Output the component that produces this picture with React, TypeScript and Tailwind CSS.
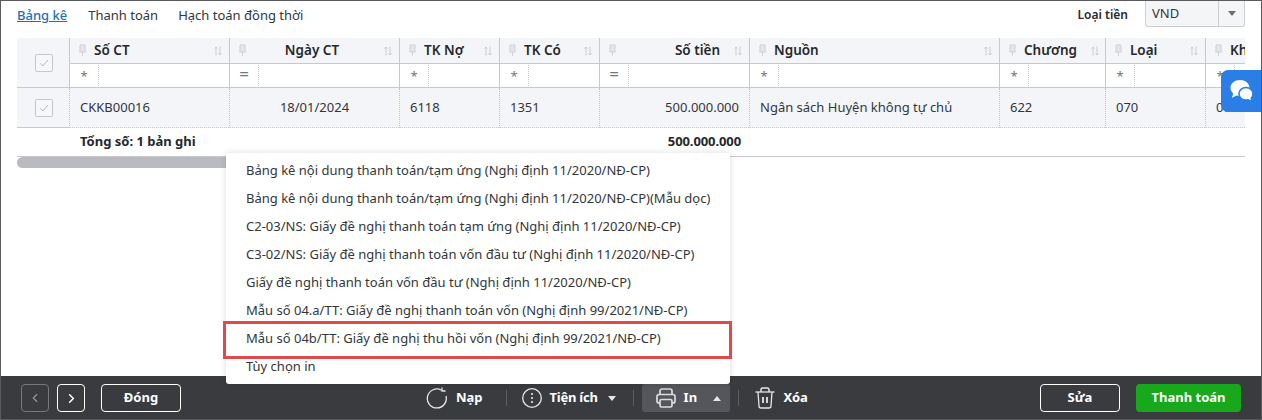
import { ChevronLeft, ChevronRight } from "lucide-react";

type Column = {
  title: string;
  width: string;
  op: string;
  value: string;
  align?: string;
  cellAlign?: string;
};

const columns: Column[] = [
  { title: "Số CT", width: "w-[160px]", op: "*", value: "CKKB00016" },
  { title: "Ngày CT", width: "w-[170px]", op: "=", value: "18/01/2024", align: "justify-center", cellAlign: "text-center" },
  { title: "TK Nợ", width: "w-[100px]", op: "*", value: "6118" },
  { title: "TK Có", width: "w-[100px]", op: "*", value: "1351" },
  { title: "Số tiền", width: "w-[150px]", op: "=", value: "500.000.000", align: "justify-end", cellAlign: "text-right" },
  { title: "Nguồn", width: "w-[250px]", op: "*", value: "Ngân sách Huyện không tự chủ" },
  { title: "Chương", width: "w-[106px]", op: "*", value: "622" },
  { title: "Loại", width: "w-[100px]", op: "*", value: "070" },
  { title: "Khoản", width: "w-[100px]", op: "*", value: "072" },
];

const printItems = [
  "Bảng kê nội dung thanh toán/tạm ứng (Nghị định 11/2020/NĐ-CP)",
  "Bảng kê nội dung thanh toán/tạm ứng (Nghị định 11/2020/NĐ-CP)(Mẫu dọc)",
  "C2-03/NS: Giấy đề nghị thanh toán tạm ứng (Nghị định 11/2020/NĐ-CP)",
  "C3-02/NS: Giấy đề nghị thanh toán vốn đầu tư (Nghị định 11/2020/NĐ-CP)",
  "Giấy đề nghị thanh toán vốn đầu tư (Nghị định 11/2020/NĐ-CP)",
  "Mẫu số 04.a/TT: Giấy đề nghị thanh toán vốn (Nghị định 99/2021/NĐ-CP)",
  "Mẫu số 04b/TT: Giấy đề nghị thu hồi vốn (Nghị định 99/2021/NĐ-CP)",
  "Tùy chọn in",
];

const PinIcon = () => (
  <svg width="7" height="14" viewBox="0 0 7 14" fill="#e4e5e8" stroke="#cfd1d5" strokeWidth="1" className="shrink-0">
    <path d="M1 1h5v6l.5 1h-6L1 7z" />
    <path d="M3.500 8v4" />
  </svg>
);

const SortIcon = () => (
  <svg width="8" height="10" viewBox="0 0 8 10" fill="none" stroke="#c9cbd0" strokeWidth="1" className="shrink-0">
    <path d="M2 9.500V1M.4 2.600 2 1l1.600 1.600" />
    <path d="M6 .5V9M4.400 7.400 6 9l1.600-1.600" />
  </svg>
);

const CheckBox = () => (
  <div className="flex h-[18px] w-[18px] items-center justify-center rounded-[2px] border border-[#c5c7cb] bg-[#f6f7f9]">
    <svg width="10" height="8" viewBox="0 0 10 8" fill="none" stroke="#b4b6bb" strokeWidth="1">
      <path d="M1 4.200 3.800 7 9 1" />
    </svg>
  </div>
);

const Separator = () => <div className="h-[16px] w-px bg-[#5d5e63]" />;

const ChatIcon = () => (
  <svg width="24" height="24" viewBox="0 0 24 24">
    <path d="M10 1C4.500 1 .5 4.400.5 8.800c0 2.300 1.100 4.300 2.800 5.700L1.800 18.800l5-2.400c.9.200 2 .3 3.200.3 5.500 0 9.500-3.500 9.500-7.900S15.500 1 10 1z" fill="#fff" />
    <path d="M16 8.500c-4 0-7 2.800-7 6.300s3 6.300 7 6.300c.8 0 1.500-.1 2.200-.3l4 1.900-1-3.400c1.100-1.100 1.800-2.800 1.800-4.500 0-3.500-3-6.300-7-6.300z" fill="#fff" stroke="#2a7fe6" strokeWidth="1.500" />
  </svg>
);

const ReloadIcon = () => (
  <svg width="22" height="22" viewBox="0 0 22 22" fill="none" stroke="#e6e6e7" strokeWidth="1.3" className="shrink-0">
    <path d="M15.500 3.200A9.500 9.500 0 1 0 20 9" />
    <path d="M16 .5v3.500h3.500" />
  </svg>
);

const DotsCircleIcon = () => (
  <svg width="20" height="20" viewBox="0 0 20 20" fill="none" className="shrink-0">
    <circle cx="10" cy="10" r="9.300" stroke="#e6e6e7" strokeWidth="1.300" />
    <circle cx="10" cy="6" r="1.100" fill="#e6e6e7" />
    <circle cx="10" cy="10" r="1.100" fill="#e6e6e7" />
    <circle cx="10" cy="14" r="1.100" fill="#e6e6e7" />
  </svg>
);

const PrinterIcon = () => (
  <svg width="20" height="20" viewBox="0 0 20 20" fill="none" stroke="#dcdcde" strokeWidth="1.700" className="shrink-0">
    <path d="M4 6.500V3a2 2 0 0 1 2-2h8a2 2 0 0 1 2 2v3.500" />
    <path d="M4 15H3a2 2 0 0 1-2-2V8.500a2 2 0 0 1 2-2h14a2 2 0 0 1 2 2V13a2 2 0 0 1-2 2h-1" />
    <rect x="4" y="11.500" width="12" height="7.500" rx="1.500" />
  </svg>
);

const TrashIcon = () => (
  <svg width="20" height="22" viewBox="0 0 20 22" fill="none" stroke="#e6e6e7" strokeWidth="1.300" className="shrink-0">
    <path d="M.5 5h19" />
    <path d="M6 5V2.500A1.500 1.500 0 0 1 7.500 1h5A1.500 1.500 0 0 1 14 2.500V5" strokeWidth="1.500" />
    <path d="M3 5l1 14a2 2 0 0 0 2 2h8a2 2 0 0 0 2-2l1-14" />
    <path d="M8 10v6M12 10v6" strokeWidth="1.800" />
  </svg>
);

const App = () => {
  return (
    <div className="relative h-[420px] w-[1262px] overflow-hidden border-x border-t border-[#5a5b5e] bg-white font-['Noto_Sans',sans-serif] text-[13px] text-[#33363b]">
      <div className="flex h-[37px] items-start justify-between pl-[16px] pr-[16px]">
        <div className="flex gap-[20px] pt-[5px] leading-[18px]">
          <span className="mr-px font-medium text-[#1f6fb5] underline">Bảng kê</span>
          <span>Thanh toán</span>
          <span>Hạch toán đồng thời</span>
        </div>
        <div className="flex items-start">
          <span className="mr-[17px] pt-[5px] text-[12px] leading-[18px] font-semibold text-[#26282c]">Loại tiền</span>
          <div className="flex h-[26px] w-[100px] items-center rounded-b-[3px] border border-t-0 border-[#cdcfd3] bg-[#f4f5f7]">
            <span className="flex-1 pl-[6px]">VND</span>
            <div className="flex h-full w-[26px] items-center justify-center border-l border-[#cdcfd3]">
              <div className="h-0 w-0 border-x-[4px] border-t-[5px] border-x-transparent border-t-[#6d6f74]" />
            </div>
          </div>
        </div>
      </div>

      <div className="ml-[16px] w-[1228px] overflow-hidden">
        <div className="flex w-[1400px]">
          <div className="flex w-[52px] shrink-0 flex-col">
            <div className="flex h-[50px] items-center justify-center border-b border-[#c8c9cc] bg-[#f4f5f8] pl-[2px]">
              <CheckBox />
            </div>
            <div className="flex h-[40px] items-center justify-center border-b border-[#c8c9cc] bg-[#f4f5f8] pl-[2px]">
              <CheckBox />
            </div>
          </div>

          {columns.map((col) => (
            <div key={col.title} className={`flex shrink-0 flex-col ${col.width}`}>
              <div className="flex h-[26px] items-center gap-[8px] border-b border-l border-[#c8c9cc] bg-[#f4f5f8] pr-[7px] pl-[9px]">
                <PinIcon />
                <div className={`flex flex-1 pr-[6px] text-[13.5px] font-semibold whitespace-nowrap text-[#26282c] ${col.align ?? "justify-start"}`}>
                  {col.title}
                </div>
                <SortIcon />
              </div>
              <div className="flex h-[24px] border-b border-l border-[#c8c9cc] bg-white">
                <div className={`flex w-[28px] items-center justify-center text-[#74767a] ${col.op === "=" ? "pb-[3px] text-[17px]" : "pt-[3px]"}`}>{col.op}</div>
                <div className="my-px flex-1 border-l border-dotted border-[#c8c9cc]" />
              </div>
              <div className={`h-[40px] border-b border-l border-dotted border-b-solid border-l-[#c0c1c5] border-b-[#c8c9cc] bg-[#f4f5f8] px-[10px] leading-[39px] whitespace-nowrap ${col.cellAlign ?? "text-left"}`}>
                {col.value}
              </div>
            </div>
          ))}
        </div>

        <div className="flex h-[29px] w-[1228px] items-center border-b border-[#c8c9cc] font-bold text-[#26282c]">
          <span className="ml-[63px] w-[511px]">Tổng số: 1 bản ghi</span>
          <span className="w-[150px] text-right tracking-[-0.1px]">500.000.000</span>
        </div>

        <div className="h-[11px] w-[1228px]">
          <div className="h-[11px] w-[500px] rounded-full bg-[#b9bbc0]" />
        </div>
      </div>

      <div className="absolute top-[375px] right-0 bottom-0 left-0 flex items-start border-b border-[#57585c] bg-[#3a3b3f] pt-[8px] pr-[20px] pl-[20px] text-white">
        <div className="flex items-center gap-[8px]">
          <button className="flex h-[28px] w-[28px] items-center justify-center rounded-[4px] border border-[#77787c] text-[#97989c]">
            <ChevronLeft size={14} strokeWidth={2} />
          </button>
          <button className="flex h-[28px] w-[28px] items-center justify-center rounded-[4px] border border-white">
            <ChevronRight size={15} strokeWidth={2.5} />
          </button>
          <button className="ml-[8px] h-[28px] w-[80px] rounded-[4px] border border-white font-bold">Đóng</button>
        </div>

        <div className="ml-[245px] flex h-[28px] items-center">
          <ReloadIcon />
          <span className="ml-[8px] font-bold">Nạp</span>
          <div className="ml-[23px]"><Separator /></div>
          <div className="ml-[15px]"><DotsCircleIcon /></div>
          <span className="ml-[8px] font-bold tracking-[-0.25px]">Tiện ích</span>
          <div className="ml-[10px] h-0 w-0 border-x-[4px] border-t-[5px] border-x-transparent border-t-[#e6e6e7]" />
          <div className="ml-[17px]"><Separator /></div>
          <div className="ml-[8px] flex h-[28px] w-[88px] items-center rounded-[3px] bg-[#55565b] pl-[14px]">
            <PrinterIcon />
            <span className="ml-[8px] font-bold">In</span>
            <div className="ml-[16px] h-0 w-0 border-x-[4px] border-b-[5px] border-x-transparent border-b-[#e6e6e7]" />
          </div>
          <div className="ml-[8px]"><Separator /></div>
          <div className="ml-[16px]"><TrashIcon /></div>
          <span className="ml-[9px] font-bold tracking-[-0.2px]">Xóa</span>
        </div>

        <div className="ml-auto flex items-center gap-[16px]">
          <button className="h-[28px] w-[80px] rounded-[4px] border border-white font-bold">Sửa</button>
          <button className="h-[28px] w-[105px] rounded-[4px] bg-[#17a81c] font-bold">Thanh toán</button>
        </div>
      </div>

      {/* print menu */}
      <div className="absolute top-[152px] left-[225px] h-[231px] w-[504px] rounded-b-[3px] bg-white pt-[3px] pl-[20px] shadow-[0_0_6px_rgba(0,0,0,0.15)]">
        {printItems.map((item) => (
          <div key={item} className="h-[28px] leading-[28px] whitespace-nowrap">
            {item}
          </div>
        ))}
      </div>
      <div className="absolute top-[320px] left-[222px] h-[38px] w-[509px] border-[3px] border-[#e04a4a]" />

      <div className="absolute top-[69px] right-[-1px] flex h-[42px] w-[41px] items-center justify-center rounded-l-[7px] bg-[#2a7fe6]">
        <ChatIcon />
      </div>
    </div>
  );
};

export default App;
